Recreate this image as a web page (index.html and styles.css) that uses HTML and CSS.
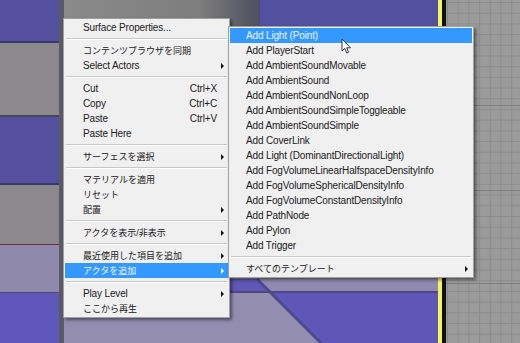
FILE: index.html
```html
<!DOCTYPE html>
<html lang="ja">
<head>
    <meta charset="UTF-8">
    <title>Viewport Menu</title>
    <link rel="stylesheet" href="styles.css">
</head>
<body>
    <div class="viewport">
        <svg class="scene" width="520" height="343" viewBox="0 0 520 343">
            <defs>
                <pattern id="gridMinor" width="10.7" height="10.7" patternUnits="userSpaceOnUse" x="447" y="2">
                    <rect width="10.7" height="10.7" fill="#9b9b9b"/>
                    <path d="M0 0.5 H10.7 M0.5 0 V10.7" stroke="#8c8c8c" stroke-width="1"/>
                </pattern>
                <linearGradient id="shadeTop" x1="0" y1="0" x2="1" y2="0">
                    <stop offset="0" stop-color="#8a8a8a"/>
                    <stop offset="0.7" stop-color="#7d7d7d"/>
                    <stop offset="1" stop-color="#4e4e5e"/>
                </linearGradient>
            </defs>
            <!-- grid on the right -->
            <rect x="446" y="0" width="74" height="343" fill="url(#gridMinor)"/>
            <path d="M446 105.5 H520 M446 190.5 H520 M446 283.5 H520" stroke="#7e7e7e"/>
            <!-- left column blocks -->
            <rect x="0" y="0" width="60" height="41" fill="#54509f"/>
            <rect x="0" y="41" width="60" height="2" fill="#3a3a66"/>
            <rect x="0" y="43" width="60" height="72" fill="#8b898b"/>
            <rect x="0" y="115" width="60" height="2" fill="#45455a"/>
            <rect x="0" y="117" width="60" height="66" fill="#54509f"/>
            <rect x="0" y="183" width="60" height="2" fill="#3a3a66"/>
            <rect x="0" y="185" width="60" height="59" fill="#8b898b"/>
            <rect x="0" y="244" width="60" height="1" fill="#6a2f40"/>
            <rect x="0" y="245" width="60" height="47" fill="#8f89ab"/>
            <rect x="0" y="292" width="60" height="1" fill="#4d4778"/>
            <rect x="0" y="293" width="60" height="50" fill="#5f57b9"/>
            <rect x="59" y="0" width="5" height="343" fill="#5a5a66"/>
            <!-- top middle -->
            <rect x="64" y="0" width="196" height="30" fill="url(#shadeTop)"/>
            <rect x="260" y="0" width="178" height="30" fill="#53509f"/>
            <!-- bottom middle -->
            <rect x="64" y="279" width="374" height="64" fill="#938db0"/>
            <polygon points="64,279 257,279 270,292 64,292" fill="#5f57b5"/>
            <polygon points="257,279 438,279 438,292 270,292" fill="#9089b0"/>
            <polygon points="270,292 438,292 438,343 321,343" fill="#5f57b8"/>
            <path d="M257 279 L321 343" stroke="#4f4890" stroke-width="3"/>
            <rect x="64" y="291" width="374" height="2" fill="#4d4780"/>
            <!-- yellow and black edge -->
            <rect x="438" y="0" width="4" height="343" fill="#f4f462"/>
            <rect x="442" y="0" width="4" height="343" fill="#111111"/>
        </svg>

        <div class="contextMenu mainMenu">
            <div class="menuItem"><span class="label">Surface Properties...</span></div>
            <div class="separator"></div>
            <div class="menuItem ja"><span class="label">コンテンツブラウザを同期</span></div>
            <div class="menuItem"><span class="label">Select Actors</span><span class="tail"><i class="arrow"></i></span></div>
            <div class="separator"></div>
            <div class="menuItem"><span class="label">Cut</span><span class="shortcut">Ctrl+X</span><span class="tail"></span></div>
            <div class="menuItem"><span class="label">Copy</span><span class="shortcut">Ctrl+C</span><span class="tail"></span></div>
            <div class="menuItem"><span class="label">Paste</span><span class="shortcut">Ctrl+V</span><span class="tail"></span></div>
            <div class="menuItem"><span class="label">Paste Here</span></div>
            <div class="separator"></div>
            <div class="menuItem ja"><span class="label">サーフェスを選択</span><span class="tail"><i class="arrow"></i></span></div>
            <div class="separator"></div>
            <div class="menuItem ja"><span class="label">マテリアルを適用</span></div>
            <div class="menuItem ja"><span class="label">リセット</span></div>
            <div class="menuItem ja"><span class="label">配置</span><span class="tail"><i class="arrow"></i></span></div>
            <div class="separator"></div>
            <div class="menuItem ja"><span class="label">アクタを表示/非表示</span><span class="tail"><i class="arrow"></i></span></div>
            <div class="separator"></div>
            <div class="menuItem ja"><span class="label">最近使用した項目を追加</span><span class="tail"><i class="arrow"></i></span></div>
            <div class="menuItem ja active"><span class="label">アクタを追加</span><span class="tail"><i class="arrow"></i></span></div>
            <div class="separator"></div>
            <div class="menuItem"><span class="label">Play Level</span><span class="tail"><i class="arrow"></i></span></div>
            <div class="menuItem ja"><span class="label">ここから再生</span></div>
        </div>

        <div class="contextMenu subMenu">
            <div class="menuItem active"><span class="label">Add Light (Point)</span></div>
            <div class="menuItem"><span class="label">Add PlayerStart</span></div>
            <div class="menuItem"><span class="label">Add AmbientSoundMovable</span></div>
            <div class="menuItem"><span class="label">Add AmbientSound</span></div>
            <div class="menuItem"><span class="label">Add AmbientSoundNonLoop</span></div>
            <div class="menuItem"><span class="label">Add AmbientSoundSimpleToggleable</span></div>
            <div class="menuItem"><span class="label">Add AmbientSoundSimple</span></div>
            <div class="menuItem"><span class="label">Add CoverLink</span></div>
            <div class="menuItem"><span class="label">Add Light (DominantDirectionalLight)</span></div>
            <div class="menuItem"><span class="label">Add FogVolumeLinearHalfspaceDensityInfo</span></div>
            <div class="menuItem"><span class="label">Add FogVolumeSphericalDensityInfo</span></div>
            <div class="menuItem"><span class="label">Add FogVolumeConstantDensityInfo</span></div>
            <div class="menuItem"><span class="label">Add PathNode</span></div>
            <div class="menuItem"><span class="label">Add Pylon</span></div>
            <div class="menuItem"><span class="label">Add Trigger</span></div>
            <div class="separator"></div>
            <div class="menuItem ja"><span class="label">すべてのテンプレート</span><span class="tail"><i class="arrow"></i></span></div>
        </div>

        <svg class="cursor" width="12" height="17" viewBox="0 0 12 17">
            <path d="M1 1 L1 13 L3.8 10.4 L5.8 15 L7.6 14.2 L5.7 9.8 L9.5 9.8 Z" fill="#ffffff" stroke="#333344" stroke-width="1" stroke-linejoin="round"/>
        </svg>
    </div>
</body>
</html>
```

FILE: styles.css
```css
body {
    margin: 0;
    background-color: #8a8a8a;
}
.viewport {
    position: relative;
    width: 520px;
    height: 343px;
    overflow: hidden;
}
.scene {
    display: block;
}
.contextMenu {
    position: absolute;
    box-sizing: border-box;
    background-color: #f0f0f0;
    border: 1px solid #a0a0a0;
    padding: 1px;
    box-shadow: 2px 2px 3px rgba(0, 0, 0, 0.45);
    font-family: "Liberation Sans", "Noto Sans CJK JP", sans-serif;
    font-size: 10px;
    letter-spacing: -0.15px;
    color: #202020;
}
.mainMenu {
    left: 63px;
    top: 18px;
    width: 167px;
}
.subMenu {
    left: 228px;
    top: 26px;
    width: 246px;
}
.menuItem {
    display: flex;
    align-items: center;
    height: 15px;
    padding-left: 18px;
    white-space: nowrap;
}
.subMenu .menuItem {
    padding-left: 16px;
}
.menuItem.ja {
    font-size: 9px;
    letter-spacing: 0;
}
.label {
    flex: 1;
}
.shortcut {
    font-size: 10px;
}
.tail {
    width: 11px;
    display: flex;
    justify-content: center;
}
.arrow {
    width: 0;
    height: 0;
    border-left: 3px solid #111111;
    border-top: 3px solid transparent;
    border-bottom: 3px solid transparent;
}
.active {
    background-color: #3399ff;
    color: #eef5ff;
}
.active .arrow {
    border-left-color: #ffffff;
}
.separator {
    height: 8px;
    margin: 0 1px;
    display: flex;
    flex-direction: column;
    justify-content: center;
}
.separator::before {
    content: "";
    display: block;
    height: 1px;
    background-color: #c8c8c8;
    border-bottom: 1px solid #ffffff;
}
.cursor {
    position: absolute;
    left: 341px;
    top: 38px;
}
```
